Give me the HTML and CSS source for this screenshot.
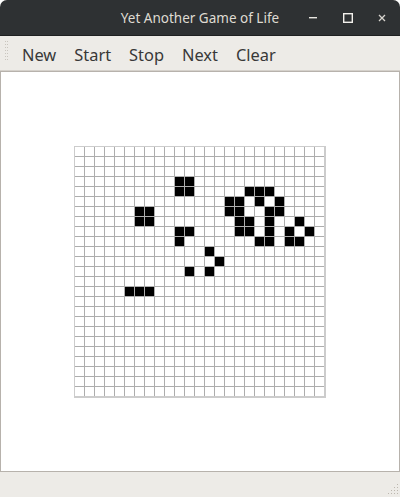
FILE: index.html
```html
<!DOCTYPE html>
<html>
<head>
<meta charset="utf-8">
<link rel="stylesheet" href="styles.css">
</head>
<body>
<div class="window">
  <header class="titlebar">
    <div></div>
    <div class="title">Yet Another Game of Life</div>
    <div class="controls">
      <svg class="ctl" width="22" height="20" viewBox="0 0 22 20"><rect x="6" y="9" width="8" height="1.4" fill="#e8e6e1"/></svg>
      <svg class="ctl" width="22" height="20" viewBox="0 0 22 20"><rect x="6.7" y="5.7" width="8.6" height="8.6" fill="none" stroke="#f2f0ec" stroke-width="1.4"/></svg>
      <svg class="ctl" width="22" height="20" viewBox="0 0 22 20"><path d="M8 7 L14 13 M14 7 L8 13" stroke="#d8d5cf" stroke-width="1.3"/></svg>
    </div>
  </header>
  <nav class="toolbar">
    <svg class="handle" width="4" height="20" viewBox="0 0 4 20">
      <g fill="#c9c5be">
        <rect x="0" y="0" width="1" height="1"/><rect x="2" y="0" width="1" height="1"/>
        <rect x="0" y="3" width="1" height="1"/><rect x="2" y="3" width="1" height="1"/>
        <rect x="0" y="6" width="1" height="1"/><rect x="2" y="6" width="1" height="1"/>
        <rect x="0" y="9" width="1" height="1"/><rect x="2" y="9" width="1" height="1"/>
        <rect x="0" y="12" width="1" height="1"/><rect x="2" y="12" width="1" height="1"/>
        <rect x="0" y="15" width="1" height="1"/><rect x="2" y="15" width="1" height="1"/>
        <rect x="0" y="18" width="1" height="1"/><rect x="2" y="18" width="1" height="1"/>
      </g>
    </svg>
    <span class="btn">New</span>
    <span class="btn">Start</span>
    <span class="btn">Stop</span>
    <span class="btn">Next</span>
    <span class="btn">Clear</span>
  </nav>
  <main class="canvas">
    <div class="board">
      <div class="cell" style="grid-area:4/11"></div><div class="cell" style="grid-area:4/12"></div>
      <div class="cell" style="grid-area:5/11"></div><div class="cell" style="grid-area:5/12"></div>
      <div class="cell" style="grid-area:5/18"></div><div class="cell" style="grid-area:5/19"></div><div class="cell" style="grid-area:5/20"></div>
      <div class="cell" style="grid-area:6/16"></div><div class="cell" style="grid-area:6/17"></div><div class="cell" style="grid-area:6/19"></div><div class="cell" style="grid-area:6/21"></div>
      <div class="cell" style="grid-area:7/7"></div><div class="cell" style="grid-area:7/8"></div><div class="cell" style="grid-area:7/16"></div><div class="cell" style="grid-area:7/17"></div><div class="cell" style="grid-area:7/20"></div><div class="cell" style="grid-area:7/21"></div>
      <div class="cell" style="grid-area:8/7"></div><div class="cell" style="grid-area:8/8"></div><div class="cell" style="grid-area:8/17"></div><div class="cell" style="grid-area:8/18"></div><div class="cell" style="grid-area:8/20"></div><div class="cell" style="grid-area:8/23"></div>
      <div class="cell" style="grid-area:9/11"></div><div class="cell" style="grid-area:9/12"></div><div class="cell" style="grid-area:9/17"></div><div class="cell" style="grid-area:9/18"></div><div class="cell" style="grid-area:9/20"></div><div class="cell" style="grid-area:9/22"></div><div class="cell" style="grid-area:9/24"></div>
      <div class="cell" style="grid-area:10/11"></div><div class="cell" style="grid-area:10/19"></div><div class="cell" style="grid-area:10/20"></div><div class="cell" style="grid-area:10/22"></div><div class="cell" style="grid-area:10/23"></div>
      <div class="cell" style="grid-area:11/14"></div>
      <div class="cell" style="grid-area:12/15"></div>
      <div class="cell" style="grid-area:13/12"></div><div class="cell" style="grid-area:13/14"></div>
      <div class="cell" style="grid-area:15/6"></div><div class="cell" style="grid-area:15/7"></div><div class="cell" style="grid-area:15/8"></div>
    </div>
  </main>
  <footer class="statusbar">
    <svg class="grip" width="11" height="11" viewBox="0 0 11 11">
      <g fill="#bcb7af">
        <rect x="9" y="0" width="1" height="1"/>
        <rect x="6" y="3" width="1" height="1"/><rect x="9" y="3" width="1" height="1"/>
        <rect x="3" y="6" width="1" height="1"/><rect x="6" y="6" width="1" height="1"/><rect x="9" y="6" width="1" height="1"/>
        <rect x="0" y="9" width="1" height="1"/><rect x="3" y="9" width="1" height="1"/><rect x="6" y="9" width="1" height="1"/><rect x="9" y="9" width="1" height="1"/>
      </g>
    </svg>
  </footer>
</div>
</body>
</html>
```
FILE: styles.css
```css
html, body {
  margin: 0;
  padding: 0;
  background: #ffffff;
}
body {
  width: 400px;
  height: 497px;
  overflow: hidden;
  font-family: "Noto Sans", "DejaVu Sans", sans-serif;
}
.window {
  display: flex;
  flex-direction: column;
  width: 400px;
  height: 497px;
  background: #edebe7;
  border-radius: 7px 7px 0 0;
  overflow: hidden;
}
.titlebar {
  height: 35px;
  flex: none;
  background: #2e3133;
  border-bottom: 1px solid #1e2021;
  display: grid;
  grid-template-columns: 1fr auto 1fr;
  align-items: center;
}
.title {
  color: #dfdbd2;
  font-size: 13.5px;
  line-height: 20px;
  padding-top: 1px;
}
.controls {
  display: flex;
  justify-content: flex-end;
  align-items: center;
  gap: 12px;
  padding-right: 7px;
}
.ctl {
  display: block;
}
.toolbar {
  height: 34px;
  flex: none;
  display: flex;
  align-items: center;
  padding-left: 5px;
  border-bottom: 1px solid #d5d1cb;
}
.handle {
  display: block;
  margin-right: 4px;
  margin-top: -4px;
}
.btn {
  font-size: 16.4px;
  color: #383838;
  padding: 0 9px;
  line-height: 24px;
  margin-top: 4px;
}
.canvas {
  flex: none;
  height: 401px;
  background: #ffffff;
  border: 1px solid #b7b2ac;
  display: flex;
  justify-content: center;
  align-items: flex-start;
  padding-top: 74px;
  box-sizing: border-box;
}
.board {
  display: grid;
  grid-template-columns: repeat(25, 9px);
  grid-template-rows: repeat(25, 9px);
  gap: 1px;
  border-left: 1px solid #cccccc;
  border-top: 1px solid #cccccc;
  border-right: 2px solid #cccccc;
  border-bottom: 2px solid #cccccc;
  background-color: #ffffff;
  background-image:
    linear-gradient(to right, transparent 9px, #adadad 9px),
    linear-gradient(to bottom, transparent 9px, #adadad 9px);
  background-size: 10px 10px;
}
.cell {
  background: #000000;
}
.statusbar {
  flex: 1;
  display: flex;
  justify-content: flex-end;
  align-items: flex-end;
  padding: 0 1px 2px 0;
}
.grip {
  display: block;
}
```
